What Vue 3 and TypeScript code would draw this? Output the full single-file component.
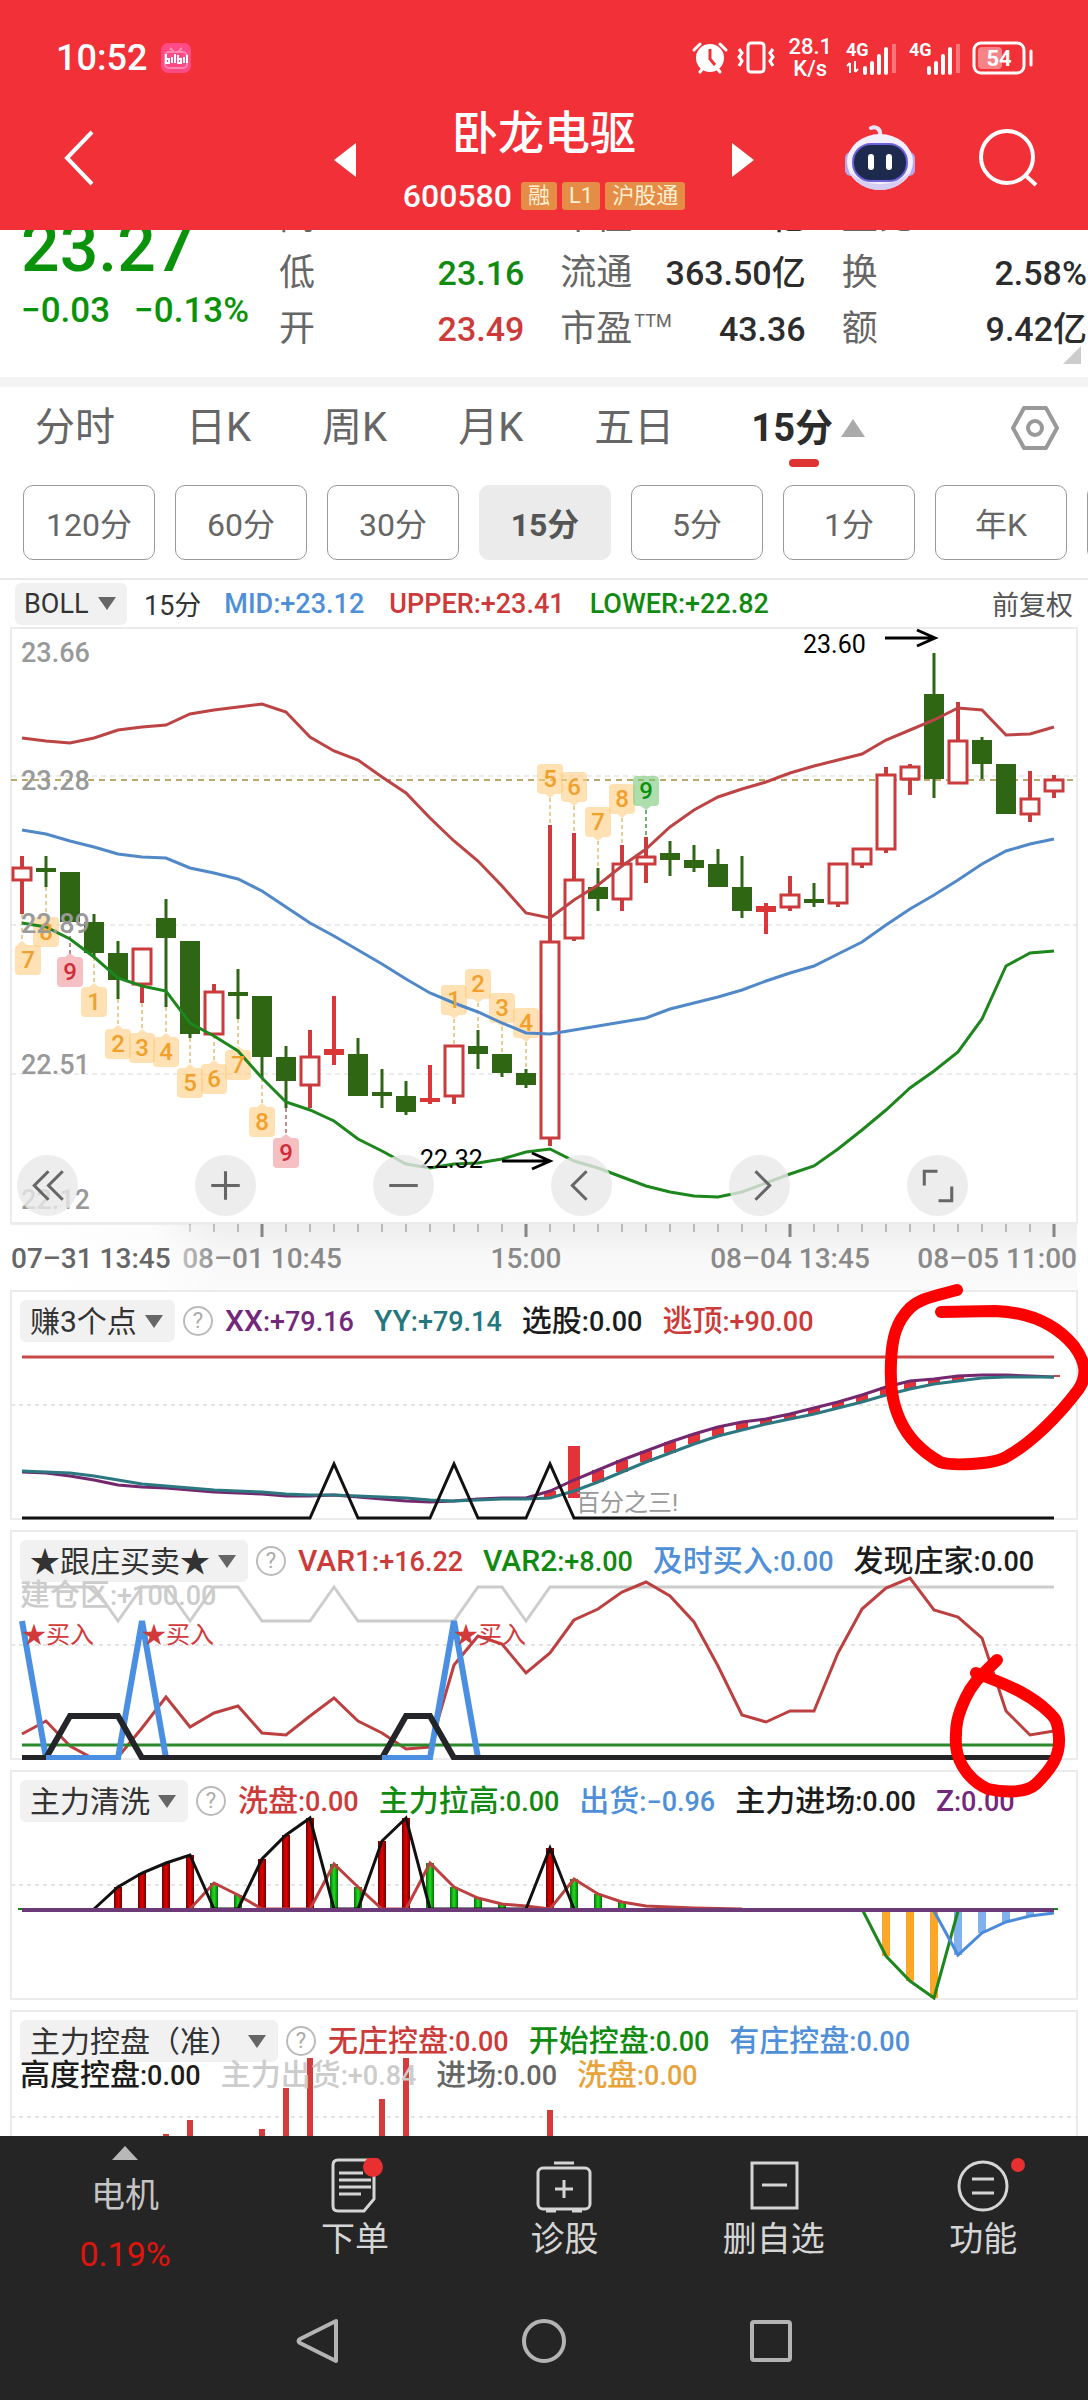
<script setup lang="ts">
import { ref } from 'vue'

type Candle = [kind: 'up' | 'down' | 'flat', high: number, low: number, top: number, bottom: number]
type Point = [index: number, y: number]
interface Badge { n: number; i: number; top: number; wick: number; tone: string; above: boolean; shift?: number }
interface Reading { name: string; value: string; tone: string }
interface Panel { id: string; title: string; row1: Reading[]; row2: Reading[]; view: string; top: number; grid: number }

const STEP = 24
const px = (i: number): number => 22 + STEP * i
const line = (ys: number[]): string => ys.map((y, i) => `${px(i)},${y}`).join(' ')
const path = (pts: Point[]): string => pts.map(([i, y]) => `${px(i)},${y}`).join(' ')

const quotes = [
  [
    { label: '高', value: '23.53', tone: 'red' },
    { label: '低', value: '23.16', tone: 'green' },
    { label: '开', value: '23.49', tone: 'red' },
  ],
  [
    { label: '市值', value: '363.50亿', tone: 'dark' },
    { label: '流通', value: '363.50亿', tone: 'dark' },
    { label: '市盈', sup: 'TTM', value: '43.36', tone: 'dark' },
  ],
  [
    { label: '量比', value: '1.04', tone: 'red' },
    { label: '换', value: '2.58%', tone: 'dark' },
    { label: '额', value: '9.42亿', tone: 'dark' },
  ],
]

const tabs = ['分时', '日K', '周K', '月K', '五日']
const periods = ['120分', '60分', '30分', '15分', '5分', '1分', '年K', '季K']
const period = ref('15分')

const boll: Reading[] = [
  { name: 'MID', value: '+23.12', tone: 'blue' },
  { name: 'UPPER', value: '+23.41', tone: 'red' },
  { name: 'LOWER', value: '+22.82', tone: 'green' },
]

const upper = [738, 741, 743, 738, 730, 727, 725, 714, 710, 707, 704, 712, 737, 751, 760, 777, 793, 818, 841, 861, 886, 913, 918, 900, 885, 866, 849, 827, 810, 797, 789, 782, 773, 766, 760, 754, 740, 730, 720, 708, 710, 735, 734, 727]
const mid = [830, 834, 841, 847, 854, 857, 858, 868, 873, 879, 891, 907, 923, 936, 950, 964, 979, 993, 1003, 1012, 1023, 1033, 1034, 1030, 1026, 1022, 1018, 1009, 1003, 997, 990, 981, 973, 966, 954, 942, 925, 909, 895, 880, 864, 851, 844, 839]
const lower = [923, 927, 939, 957, 978, 986, 991, 1023, 1036, 1051, 1078, 1102, 1110, 1121, 1139, 1151, 1164, 1168, 1164, 1163, 1159, 1152, 1149, 1161, 1168, 1177, 1186, 1192, 1196, 1197, 1192, 1183, 1174, 1166, 1149, 1130, 1110, 1088, 1071, 1052, 1019, 966, 953, 951]

const candles: Candle[] = [
  ['up', 856, 914, 867, 881], ['down', 856, 887, 868, 872], ['down', 872, 922, 872, 922], ['down', 914, 957, 922, 953],
  ['down', 941, 999, 953, 980], ['up', 948, 1003, 948, 985], ['down', 899, 1007, 918, 938], ['down', 941, 1038, 941, 1034],
  ['up', 984, 1035, 991, 1035], ['down', 969, 1019, 992, 996], ['down', 996, 1078, 996, 1057], ['down', 1046, 1108, 1057, 1081],
  ['up', 1030, 1108, 1056, 1086], ['flat', 996, 1065, 1049, 1055], ['down', 1038, 1096, 1054, 1096], ['down', 1069, 1108, 1092, 1096],
  ['down', 1081, 1115, 1096, 1112], ['flat', 1065, 1104, 1098, 1102], ['up', 1045, 1104, 1045, 1097], ['down', 1030, 1069, 1046, 1054],
  ['down', 1054, 1077, 1054, 1073], ['down', 1069, 1088, 1073, 1085], ['up', 825, 1146, 941, 1139], ['up', 833, 941, 879, 939],
  ['down', 868, 911, 887, 899], ['up', 845, 911, 863, 900], ['up', 837, 883, 856, 865], ['down', 841, 876, 853, 860],
  ['down', 845, 872, 860, 868], ['down', 849, 887, 864, 887], ['down', 856, 918, 887, 911], ['flat', 903, 934, 906, 912],
  ['up', 876, 911, 894, 908], ['down', 883, 907, 899, 903], ['up', 863, 907, 863, 904], ['up', 848, 868, 848, 865],
  ['up', 767, 853, 774, 850], ['up', 764, 795, 766, 780], ['down', 653, 798, 694, 779], ['up', 702, 783, 740, 784],
  ['down', 737, 779, 740, 764], ['down', 764, 814, 764, 814], ['up', 771, 822, 798, 815], ['up', 775, 798, 779, 792],
]

const badges: Badge[] = [
  { n: 7, i: 0, top: 945, wick: 914, tone: 'amber', above: false, shift: 6 },
  { n: 8, i: 1, top: 917, wick: 887, tone: 'amber', above: false },
  { n: 9, i: 2, top: 957, wick: 922, tone: 'rose', above: false },
  { n: 1, i: 3, top: 987, wick: 957, tone: 'amber', above: false },
  { n: 2, i: 4, top: 1029, wick: 999, tone: 'amber', above: false },
  { n: 3, i: 5, top: 1033, wick: 1003, tone: 'amber', above: false },
  { n: 4, i: 6, top: 1037, wick: 1007, tone: 'amber', above: false },
  { n: 5, i: 7, top: 1068, wick: 1038, tone: 'amber', above: false },
  { n: 6, i: 8, top: 1064, wick: 1035, tone: 'amber', above: false },
  { n: 7, i: 9, top: 1050, wick: 1019, tone: 'amber', above: false },
  { n: 8, i: 10, top: 1107, wick: 1078, tone: 'amber', above: false },
  { n: 9, i: 11, top: 1138, wick: 1108, tone: 'rose', above: false },
  { n: 1, i: 18, top: 985, wick: 1045, tone: 'amber', above: true },
  { n: 2, i: 19, top: 969, wick: 1030, tone: 'amber', above: true },
  { n: 3, i: 20, top: 993, wick: 1054, tone: 'amber', above: true },
  { n: 4, i: 21, top: 1008, wick: 1069, tone: 'amber', above: true },
  { n: 5, i: 22, top: 764, wick: 825, tone: 'amber', above: true },
  { n: 6, i: 23, top: 772, wick: 833, tone: 'amber', above: true },
  { n: 7, i: 24, top: 807, wick: 868, tone: 'amber', above: true },
  { n: 8, i: 25, top: 784, wick: 845, tone: 'amber', above: true },
  { n: 9, i: 26, top: 776, wick: 837, tone: 'mint', above: true },
]
const badgeX = (b: Badge): number => px(b.i) + (b.shift ?? 0)

const prices = [
  { text: '23.66', y: 662 }, { text: '23.28', y: 790 }, { text: '22.89', y: 933 }, { text: '22.51', y: 1074 }, { text: '22.12', y: 1209 },
]
const ticks = Array.from({ length: 37 }, (_, k) => k + 7)
const isMajor = (i: number): boolean => i % 11 === 10

const panels: Panel[] = [
  {
    id: 'gain', title: '赚3个点', view: '0 1290 1088 230', top: 1290, grid: 1405,
    row1: [
      { name: 'XX', value: '+79.16', tone: 'purple' }, { name: 'YY', value: '+79.14', tone: 'teal' },
      { name: '选股', value: '0.00', tone: 'black' }, { name: '逃顶', value: '+90.00', tone: 'red' },
    ],
    row2: [],
  },
  {
    id: 'follow', title: '★跟庄买卖★', view: '0 1530 1088 230', top: 1530, grid: 1645,
    row1: [
      { name: 'VAR1', value: '+16.22', tone: 'red' }, { name: 'VAR2', value: '+8.00', tone: 'green' },
      { name: '及时买入', value: '0.00', tone: 'blue' }, { name: '发现庄家', value: '0.00', tone: 'black' },
    ],
    row2: [{ name: '建仓区', value: '+100.00', tone: 'pale' }],
  },
  {
    id: 'wash', title: '主力清洗', view: '0 1770 1088 230', top: 1770, grid: 1885,
    row1: [
      { name: '洗盘', value: '0.00', tone: 'red' }, { name: '主力拉高', value: '0.00', tone: 'green' },
      { name: '出货', value: '−0.96', tone: 'blue' }, { name: '主力进场', value: '0.00', tone: 'black' },
      { name: 'Z', value: '0.00', tone: 'purple' },
    ],
    row2: [],
  },
  {
    id: 'control', title: '主力控盘（准）', view: '0 2010 1088 126', top: 2010, grid: 2117,
    row1: [
      { name: '无庄控盘', value: '0.00', tone: 'red' }, { name: '开始控盘', value: '0.00', tone: 'green' },
      { name: '有庄控盘', value: '0.00', tone: 'blue' },
    ],
    row2: [
      { name: '高度控盘', value: '0.00', tone: 'black' }, { name: '主力出货', value: '+0.84', tone: 'pale' },
      { name: '进场', value: '0.00', tone: 'gray' }, { name: '洗盘', value: '0.00', tone: 'orange' },
    ],
  },
]

const xx = [1472, 1473, 1476, 1480, 1485, 1487, 1488, 1490, 1492, 1493, 1494, 1496, 1496, 1495, 1497, 1499, 1501, 1502, 1501, 1499, 1498, 1498, 1491, 1480, 1470, 1460, 1451, 1442, 1434, 1427, 1422, 1419, 1414, 1408, 1402, 1395, 1387, 1381, 1379, 1376, 1375, 1375, 1376, 1377]
const yy = [1471, 1472, 1473, 1476, 1480, 1484, 1486, 1488, 1490, 1491, 1492, 1494, 1495, 1495, 1496, 1497, 1498, 1500, 1501, 1500, 1499, 1499, 1498, 1491, 1482, 1472, 1462, 1453, 1444, 1436, 1430, 1424, 1419, 1414, 1408, 1402, 1395, 1389, 1384, 1381, 1378, 1377, 1377, 1377]
const gapBars = Array.from({ length: 18 }, (_, k) => k + 22).filter((i) => i !== 23)
const picks: Point[] = [[0, 1518], [12, 1518], [13, 1464], [14, 1518], [17, 1518], [18, 1464], [19, 1518], [21, 1518], [22, 1464], [23, 1518], [43, 1518]]

const zone: Point[] = [[0, 1587], [3, 1587], [4, 1621], [5, 1587], [6, 1587], [7, 1621], [8, 1587], [9, 1587], [10, 1621], [12, 1621], [13, 1587], [14, 1621], [18, 1621], [19, 1587], [20, 1587], [21, 1621], [22, 1587], [43, 1587]]
const var1 = [1734, 1721, 1746, 1759, 1757, 1728, 1697, 1727, 1713, 1706, 1733, 1735, 1716, 1698, 1721, 1733, 1749, 1747, 1665, 1636, 1644, 1673, 1653, 1620, 1609, 1592, 1582, 1596, 1622, 1666, 1715, 1722, 1711, 1711, 1653, 1609, 1588, 1578, 1610, 1617, 1638, 1711, 1735, 1731]
const buys: Point[] = [[0, 1621], [1, 1758], [4, 1758], [5, 1621], [6, 1758], [17, 1758], [18, 1621], [19, 1758]]
const makers: Point[] = [[0, 1758], [1, 1758], [2, 1716], [4, 1716], [5, 1758], [15, 1758], [16, 1716], [17, 1716], [18, 1758], [43, 1758]]
const buyRuns: Point[][] = [[[1, 1758], [4, 1758]], [[15, 1758], [17, 1758]]]
const buyMarks = [0, 5, 18]

const washBars: Point[] = [[4, 1887], [5, 1873], [6, 1863], [7, 1855], [10, 1859], [11, 1835], [12, 1818], [15, 1841], [16, 1818], [22, 1848]]
const liftBars: Point[] = [[8, 1883], [9, 1895], [13, 1864], [14, 1887], [17, 1863], [18, 1887], [19, 1898], [20, 1904], [23, 1879], [24, 1894], [25, 1902]]
const enterLine: Point[] = [[3, 1909], [4, 1887], [5, 1873], [6, 1863], [7, 1855], [8, 1909], [9, 1909], [10, 1859], [11, 1835], [12, 1818], [13, 1909], [14, 1909], [15, 1841], [16, 1818], [17, 1909], [21, 1909], [22, 1848], [23, 1909]]
const washLine: Point[] = [[7, 1909], [8, 1883], [9, 1895], [10, 1909], [12, 1909], [13, 1864], [14, 1887], [15, 1909], [16, 1909], [17, 1863], [18, 1887], [19, 1898], [20, 1904], [21, 1906], [22, 1909], [23, 1879], [24, 1894], [25, 1902], [26, 1906], [28, 1908], [30, 1909]]
const dropBars: Point[] = [[36, 1956], [37, 1981], [38, 1998]]
const dropLine: Point[] = [[35, 1909], [36, 1956], [37, 1981], [38, 1998], [39, 1911]]
const sellBars: Point[] = [[39, 1955], [40, 1933], [41, 1922], [42, 1916]]
const sellLine: Point[] = [[38, 1911], [39, 1955], [40, 1933], [41, 1922], [42, 1916], [43, 1913]]
const controlBars: Point[] = [[6, 2134], [7, 2120], [10, 2129], [11, 2088], [12, 2058], [15, 2099], [16, 2058], [22, 2110]]
</script>

<template>
  <div class="app">
    <header class="top">
      <div class="status">
        <span class="clock">10:52</span>
        <svg class="bili" width="30" height="30" viewBox="0 0 30 30" aria-hidden="true">
          <rect width="30" height="30" rx="7" fill="#ff4a86" />
          <path d="M9 5l4 4M21 5l-4 4" stroke="#ff8fb5" stroke-width="2" />
          <rect x="4" y="9" width="22" height="16" rx="4" fill="none" stroke="#ff86af" stroke-width="2" />
          <path d="M5 11v9h3v-4h-3M11 14v6M14 11v9M17 12v8h3v-4h-3M23 14v6M26 12v8" fill="none" stroke="#fff" stroke-width="2" />
        </svg>
        <span class="spacer"></span>
        <svg width="36" height="34" viewBox="0 0 36 34" aria-hidden="true">
          <circle cx="18" cy="17" r="14" fill="#fff" />
          <path d="M2 9l6-6M34 9l-6-6M8 31l3-4M28 31l-3-4" stroke="#fff" stroke-width="3" stroke-linecap="round" />
          <path d="M18 8v10l5 6" fill="none" stroke="#f23037" stroke-width="3" />
        </svg>
        <svg class="vibrate" width="40" height="34" viewBox="0 0 40 34" fill="none" stroke="#fff" stroke-width="3" aria-hidden="true">
          <rect x="12" y="2" width="16" height="29" rx="3" />
          <path d="M3 8l3 4-3 4 3 4-3 5M37 8l-3 4 3 4-3 4 3 5" />
        </svg>
        <span class="speed"><span>28.1</span><span>K/s</span></span>
        <svg class="signal" width="52" height="34" viewBox="0 0 52 34" aria-hidden="true">
          <text x="0" y="15" font-size="18" font-weight="700" fill="#fff">4G</text>
          <path d="M4 22v10M1 25l3-3M9 20v11M12 28l-3 3" stroke="#fff" stroke-width="2" fill="none" />
          <path d="M19 27v5M26 22v10M33 15v17M40 8v24" stroke="#fff" stroke-width="4" stroke-linecap="round" />
          <path d="M48 3v29" stroke="#fff" stroke-opacity=".35" stroke-width="4" />
        </svg>
        <svg class="signal" width="52" height="34" viewBox="0 0 52 34" aria-hidden="true">
          <text x="0" y="15" font-size="18" font-weight="700" fill="#fff">4G</text>
          <path d="M20 27v5M27 22v10M34 15v17M41 8v24" stroke="#fff" stroke-width="4" stroke-linecap="round" />
          <path d="M49 3v29" stroke="#fff" stroke-opacity=".35" stroke-width="4" />
        </svg>
        <svg width="61" height="34" viewBox="0 0 61 34" aria-hidden="true">
          <rect x="2" y="2" width="50" height="30" rx="7" fill="none" stroke="#fff" stroke-width="3" />
          <rect x="6" y="6" width="24" height="22" rx="4" fill="#fff" fill-opacity=".4" />
          <path d="M59 10v14" stroke="#fff" stroke-width="3" stroke-linecap="round" />
          <text x="27" y="25" font-size="22" font-weight="700" text-anchor="middle" fill="#fff">54</text>
        </svg>
      </div>
      <div class="titlebar">
        <button class="icon-btn back" aria-label="返回">
          <svg width="34" height="58" viewBox="0 0 34 58"><path d="M30 3L5 29l25 26" fill="none" stroke="#fff" stroke-width="4" /></svg>
        </button>
        <div class="stock">
          <button class="icon-btn" aria-label="上一只"><svg width="22" height="36" viewBox="0 0 22 36"><path d="M22 1v34L0 18z" fill="#fff" /></svg></button>
          <div class="stock-main">
            <h1>卧龙电驱</h1>
            <div class="code">
              <span>600580</span><i>融</i><i>L1</i><i>沪股通</i>
            </div>
          </div>
          <button class="icon-btn" aria-label="下一只"><svg width="22" height="36" viewBox="0 0 22 36"><path d="M0 1v34l22-17z" fill="#fff" /></svg></button>
        </div>
        <div class="tools">
          <button class="icon-btn" aria-label="智能助手">
            <svg width="72" height="66" viewBox="0 0 72 66">
              <path d="M36 10C37 4 32 1 27 3" fill="none" stroke="#e9e4fa" stroke-width="4" stroke-linecap="round" />
              <rect x="1" y="27" width="12" height="24" rx="6" fill="#b9a8ee" />
              <rect x="59" y="27" width="12" height="24" rx="6" fill="#b9a8ee" />
              <ellipse cx="36" cy="37" rx="33" ry="28" fill="#f3effd" />
              <path d="M6 46c5 12 16 19 30 19s25-7 30-19c-6 8-16 13-30 13S12 54 6 46z" fill="#d6cdf3" />
              <rect x="9" y="19" width="54" height="37" rx="18" fill="#1d2a4d" stroke="#6d62d8" stroke-width="2" />
              <path d="M27 32v10M45 32v10" stroke="#fff" stroke-width="6" stroke-linecap="round" />
            </svg>
          </button>
          <button class="icon-btn" aria-label="搜索">
            <svg width="60" height="60" viewBox="0 0 60 60" fill="none" stroke="#fff" stroke-width="4"><circle cx="29" cy="29" r="26" /><path d="M47 47l11 10" /></svg>
          </button>
        </div>
      </div>
    </header>

    <section class="quote">
      <div class="last">
        <strong>23.27</strong>
        <p><span>−0.03</span><span>−0.13%</span></p>
      </div>
      <dl v-for="(col, c) in quotes" :key="c">
        <div v-for="q in col" :key="q.label">
          <dt>{{ q.label }}<sup v-if="q.sup">{{ q.sup }}</sup></dt>
          <dd :class="q.tone">{{ q.value }}</dd>
        </div>
      </dl>
      <svg class="corner" width="18" height="18" viewBox="0 0 18 18" aria-hidden="true"><path d="M18 0v18H0z" fill="#ccc" /></svg>
    </section>

    <nav class="tabs">
      <button v-for="t in tabs" :key="t">{{ t }}</button>
      <button class="active">15分<svg width="24" height="18" viewBox="0 0 24 18" aria-hidden="true"><path d="M12 0l12 18H0z" fill="#aaa" /></svg></button>
      <button class="gear" aria-label="设置">
        <svg width="48" height="46" viewBox="0 0 48 46" fill="none" stroke="#999" stroke-width="4" stroke-linejoin="round"><path d="M13 3h22l11 20-11 20H13L2 23z" /><circle cx="24" cy="23" r="7" /></svg>
      </button>
    </nav>

    <div class="periods">
      <button v-for="p in periods" :key="p" :class="{ on: p === period }" @click="period = p">{{ p }}</button>
    </div>

    <div class="legend">
      <label class="picker">
        <select aria-label="主图指标"><option>BOLL</option></select>
        <svg width="18" height="13" viewBox="0 0 18 13" aria-hidden="true"><path d="M0 0h18L9 13z" fill="#666" /></svg>
      </label>
      <span class="span">15分</span>
      <span v-for="r in boll" :key="r.name" :class="['line-value', r.tone]">{{ r.name }}:{{ r.value }}</span>
      <span class="adjust">前复权</span>
    </div>

    <section class="chart">
      <svg viewBox="0 627 1088 663" role="img" aria-label="15分钟K线">
        <defs>
          <linearGradient id="shade" x1="0" y1="0" x2="0" y2="1"><stop offset="0" stop-color="#ededed" /><stop offset=".5" stop-color="#f8f8f8" /><stop offset="1" stop-color="#fafafa" /></linearGradient>
          <linearGradient id="fade" x1="0" y1="0" x2="1" y2="0"><stop offset="0" stop-color="#fff" /><stop offset=".7" stop-color="#fff" stop-opacity=".8" /><stop offset="1" stop-color="#fff" stop-opacity="0" /></linearGradient>
        </defs>
        <rect x="11" y="1223" width="1066" height="67" fill="url(#shade)" />
        <rect x="11" y="628" width="1066" height="595" fill="#fff" stroke="#ebebeb" stroke-width="2" />
        <path d="M11 776h1066M11 925h1066M11 1074h1066" stroke="#d9d9d9" stroke-dasharray="5 4" />
        <path d="M11 780h1066" stroke="#b9a86c" stroke-width="2" stroke-dasharray="6 5" />

        <g v-for="(c, i) in candles" :key="i" :class="['candle', c[0]]">
          <template v-if="c[0] === 'up'">
            <path :d="`M${px(i)} ${c[1]}V${c[3]}M${px(i)} ${c[4]}V${c[2]}`" />
            <rect :x="px(i) - 9" :y="c[3] + 1" width="18" :height="c[4] - c[3] - 2" />
          </template>
          <template v-else>
            <path :d="`M${px(i)} ${c[1]}V${c[2]}`" />
            <rect :x="px(i) - 10" :y="c[3]" width="20" :height="c[4] - c[3]" />
          </template>
        </g>

        <g v-for="(b, k) in badges" :key="k" :class="['badge', b.tone]">
          <line :x1="px(b.i)" :x2="px(b.i)" :y1="b.above ? b.top + 34 : b.wick" :y2="b.above ? b.wick : b.top - 3" />
          <rect :x="badgeX(b) - 13" :y="b.top" width="26" height="30" rx="4" />
          <path :d="b.above ? `M${px(b.i) - 5} ${b.top + 30}h10l-5 4z` : `M${px(b.i) - 5} ${b.top}h10l-5 -4z`" />
        </g>

        <polyline :points="line(upper)" class="upper" />
        <polyline :points="line(mid)" class="mid" />
        <polyline :points="line(lower)" class="lower" />

        <g v-for="(b, k) in badges" :key="`n${k}`" :class="['digit', b.tone]">
          <text :x="badgeX(b)" :y="b.top + 23">{{ b.n }}</text>
        </g>

        <g class="price"><text v-for="p in prices" :key="p.text" x="21" :y="p.y">{{ p.text }}</text></g>
        <g class="extreme">
          <text x="803" y="653">23.60</text>
          <path d="M885 638h49M917 630l18 8-18 8" />
          <text x="420" y="1168">22.32</text>
          <path d="M502 1161h47M532 1153l18 8-18 8" />
        </g>

        <path v-for="i in ticks" :key="`t${i}`" :d="`M${px(i)} 1224v${isMajor(i) ? 13 : 8}`" stroke="#858585" :stroke-width="isMajor(i) ? 3 : 1" />
        <g class="time">
          <text x="262" y="1268" text-anchor="middle">08–01 10:45</text>
          <text x="526" y="1268" text-anchor="middle">15:00</text>
          <text x="790" y="1268" text-anchor="middle">08–04 13:45</text>
          <text x="1077" y="1268" text-anchor="end">08–05 11:00</text>
        </g>
        <rect x="0" y="1225" width="220" height="65" fill="url(#fade)" />
        <text class="start" x="11" y="1268">07–31 13:45</text>
      </svg>
      <div class="controls">
        <button aria-label="最早"><svg viewBox="0 0 60 60"><path d="M31 16L17 30l14 14M45 16L31 30l14 14" /></svg></button>
        <button aria-label="放大"><svg viewBox="0 0 60 60"><path d="M16 30h28M30 16v28" /></svg></button>
        <button aria-label="缩小"><svg viewBox="0 0 60 60"><path d="M16 30h28" /></svg></button>
        <button aria-label="左移"><svg viewBox="0 0 60 60"><path d="M35 16L21 30l14 14" /></svg></button>
        <button aria-label="右移"><svg viewBox="0 0 60 60"><path d="M26 16l14 14-14 14" /></svg></button>
        <button aria-label="全屏"><svg viewBox="0 0 60 60"><path d="M17 30V16h13M44 31v14H31" /></svg></button>
      </div>
    </section>

    <main class="panels">
      <section v-for="p in panels" :key="p.id" class="panel">
        <svg :viewBox="p.view" role="img" :aria-label="p.title">
          <rect x="11" :y="p.top + 1" width="1066" height="228" fill="#fff" stroke="#ebebeb" stroke-width="2" />
          <path :d="`M11 ${p.grid}h1066`" stroke="#e4e4e4" stroke-width="2" stroke-dasharray="4 4" />
          <g v-if="p.id === 'gain'">
            <path d="M22 1357h1032" stroke="#c84848" stroke-width="3" />
            <rect v-for="i in gapBars" :key="i" :x="px(i) - 6" :y="xx[i]" width="12" :height="yy[i] - xx[i]" fill="#e23338" />
            <rect x="568" y="1446" width="12" height="52" fill="#e23338" />
            <path d="M1054 1376h6" stroke="#c84848" stroke-width="2" />
            <polyline :points="line(xx)" class="plot xx" />
            <polyline :points="line(yy)" class="plot yy" />
            <polyline :points="path(picks)" class="plot ink" />
            <text x="576" y="1511" font-size="24" fill="#999">百分之三!</text>
          </g>
          <g v-else-if="p.id === 'follow'">
            <polyline :points="path(zone)" class="plot zone" />
            <polyline :points="line(var1)" class="plot crimson" />
            <path d="M22 1745h1032" stroke="#2a8a2a" stroke-width="3" />
            <polyline :points="path(buys)" class="plot buys" />
            <polyline :points="path(makers)" class="plot makers" />
            <polyline v-for="(run, k) in buyRuns" :key="`r${k}`" :points="path(run)" class="plot buys" />
            <text v-for="i in buyMarks" :key="i" :x="px(i)" y="1643" font-size="24" fill="#d23a3a">★买入</text>
          </g>
          <g v-else-if="p.id === 'wash'">
            <defs>
              <linearGradient id="redbar"><stop offset="0" stop-color="#6d0000" /><stop offset=".5" stop-color="#e80000" /><stop offset="1" stop-color="#6d0000" /></linearGradient>
              <linearGradient id="greenbar"><stop offset="0" stop-color="#0a6b0a" /><stop offset=".5" stop-color="#1ee01e" /><stop offset="1" stop-color="#0a6b0a" /></linearGradient>
            </defs>
            <rect v-for="[i, y] in washBars" :key="i" :x="px(i) - 4" :y="y" width="8" :height="1909 - y" fill="url(#redbar)" />
            <rect v-for="[i, y] in liftBars" :key="i" :x="px(i) - 4" :y="y" width="8" :height="1909 - y" fill="url(#greenbar)" />
            <rect v-for="[i, y] in dropBars" :key="i" :x="px(i) - 4" y="1910" width="8" :height="y - 1910" fill="#fca728" />
            <rect v-for="[i, y] in sellBars" :key="i" :x="px(i) - 4" y="1910" width="8" :height="y - 1910" fill="#82b1ee" />
            <polyline :points="path(washLine)" class="plot crimson" />
            <polyline :points="path(enterLine)" class="plot ink" />
            <polyline :points="path(dropLine)" class="plot drop" />
            <polyline :points="path(sellLine)" class="plot sell" />
            <path d="M18 1909h4M1054 1909h4" stroke="#118811" stroke-width="2" />
            <path d="M22 1910h1032" stroke="#6c3a76" stroke-width="4" />
          </g>
          <g v-else>
            <rect v-for="[i, y] in controlBars" :key="i" :x="px(i) - 3" :y="y" width="6" :height="2136 - y" fill="#d43b3b" />
          </g>
        </svg>
        <div class="readout">
          <div class="row">
            <label class="picker">
              <select :aria-label="`指标 ${p.title}`"><option>{{ p.title }}</option></select>
              <svg width="18" height="13" viewBox="0 0 18 13" aria-hidden="true"><path d="M0 0h18L9 13z" fill="#666" /></svg>
            </label>
            <button class="help" aria-label="说明">?</button>
            <span v-for="r in p.row1" :key="r.name" :class="['reading', r.tone]">{{ r.name }}<b>:{{ r.value }}</b></span>
          </div>
          <div v-if="p.row2.length" class="row second">
            <span v-for="r in p.row2" :key="r.name" :class="['reading', r.tone]">{{ r.name }}<b>:{{ r.value }}</b></span>
          </div>
        </div>
      </section>
      <svg class="ink-marks" viewBox="0 1280 1088 530" aria-hidden="true">
        <path d="M957 1290C935 1296 921 1298 910 1308C896 1322 892 1338 891 1362C890 1386 892 1402 900 1420C910 1442 926 1454 940 1462C950 1466 992 1465 1006 1457C1032 1443 1060 1414 1078 1390C1088 1376 1086 1362 1074 1346C1054 1322 1026 1312 995 1311L941 1312" />
        <path d="M997 1660C981 1676 973 1682 966 1697C957 1716 955 1726 956 1746C958 1766 972 1782 988 1789C1006 1793 1026 1793 1036 1784C1052 1768 1060 1756 1059 1738C1058 1720 1056 1718 1042 1706C1022 1690 1000 1682 976 1673" />
      </svg>
    </main>

    <footer>
      <nav class="bottom">
        <a href="#sector" class="sector">
          <svg width="26" height="14" viewBox="0 0 26 14" aria-hidden="true"><path d="M13 0l13 14H0z" fill="#b8b8b8" /></svg>
          <span>电机</span><em>0.19%</em>
        </a>
        <a href="#order">
          <svg width="60" height="56" viewBox="0 0 60 56"><path d="M13 2h31q5 0 5 5v34L39 53H13q-5 0-5-5V7q0-5 5-5zM14 15h24M14 22h32M14 29h32M14 36h22" /><circle cx="48" cy="9" r="10" class="dot" /></svg>
          <span>下单</span>
        </a>
        <a href="#diagnose">
          <svg width="60" height="56" viewBox="0 0 60 56"><rect x="4" y="10" width="52" height="41" rx="5" /><path d="M20 5h20M12 53h10M38 53h10M21 31h18M30 22v18" /></svg>
          <span>诊股</span>
        </a>
        <a href="#remove">
          <svg width="60" height="56" viewBox="0 0 60 56"><path d="M8 5h45v45H8zM18 27h25" /></svg>
          <span>删自选</span>
        </a>
        <a href="#more">
          <svg width="84" height="56" viewBox="0 0 84 56"><circle cx="42" cy="28" r="24" /><path d="M31 21h22M31 35h22" /><circle cx="77" cy="7" r="7" class="dot" /></svg>
          <span>功能</span>
        </a>
      </nav>
      <div class="system">
        <button aria-label="返回"><svg width="48" height="48" viewBox="0 0 48 48"><path d="M43 4v40L7 26q-3-2 0-4z" /></svg></button>
        <button aria-label="主页"><svg width="48" height="48" viewBox="0 0 48 48"><circle cx="24" cy="24" r="20" /></svg></button>
        <button aria-label="多任务"><svg width="48" height="48" viewBox="0 0 48 48"><rect x="5" y="5" width="38" height="38" rx="2" /></svg></button>
      </div>
    </footer>
  </div>
</template>

<style>
body { background: #fff; }
</style>

<style scoped>
.app { font-family: Roboto, "Noto Sans CJK SC", sans-serif; color: #333; background: #fff; overflow: hidden; }
.app * { box-sizing: border-box; }
button, select { font: inherit; color: inherit; border: 0; background: none; padding: 0; margin: 0; }
svg { display: block; flex: none; }
h1, p, dl, dd { margin: 0; }

.red { color: #cc3a3a; }
.green { color: #118a11; }
.blue { color: #4f8fd8; }
.purple { color: #74287c; }
.teal { color: #24777f; }
.black { color: #1c1c1c; }
.dark { color: #2c2c2c; }
.gray { color: #666; }
.pale { color: #ccc; }
.orange { color: #e8a33a; }

.top { background: #f23037; color: #fff; height: 230px; display: flex; flex-direction: column; }
.status { display: flex; align-items: center; padding: 30px 55px 0 56px; height: 86px; }
.clock { font-size: 36px; font-weight: 500; margin-right: 14px; }
.spacer { flex: 1; }
.vibrate { margin: 0 12px 0 8px; }
.speed { display: flex; flex-direction: column; align-items: center; font-size: 22px; line-height: 22px; font-weight: 500; margin-right: 14px; }
.signal { margin-right: 11px; overflow: visible; }
.titlebar { display: grid; grid-template-columns: 1fr auto 1fr; align-items: center; height: 144px; padding: 0 50px; }
.icon-btn { display: block; }
.back { padding-left: 12px; }
.stock { display: flex; align-items: center; justify-content: space-between; width: 420px; }
.stock-main { display: flex; flex-direction: column; align-items: center; gap: 14px; }
.stock > .icon-btn { padding-top: 4px; }
h1 { font-size: 46px; line-height: 62px; font-weight: 500; }
.code { display: flex; align-items: center; gap: 5px; font-size: 32px; line-height: 36px; font-weight: 500; white-space: nowrap; }
.code span { margin-right: 4px; }
.code i { font-style: normal; font-weight: 400; font-size: 22px; line-height: 28px; padding: 0 7px; border-radius: 3px; background: #e58c46; color: #fdf0d2; }
.tools { display: flex; align-items: center; justify-content: flex-end; gap: 62px; }

.quote { position: relative; display: grid; grid-template-columns: 222px 1fr 1fr 1fr; column-gap: 36px; height: 157px; padding: 0 1px 0 21px; overflow: hidden; border-bottom: 10px solid #f4f4f4; font-weight: 500; }
.last { color: #0a930a; margin-top: -21px; white-space: nowrap; }
.last strong { display: block; font-size: 68px; line-height: 78px; font-weight: 500; }
.last p { display: flex; gap: 24px; font-size: 35px; line-height: 48px; }
.quote dl { margin-top: -41px; }
.quote dl div { display: flex; justify-content: space-between; align-items: center; height: 56px; white-space: nowrap; }
.quote dt { display: flex; font-size: 36px; line-height: 56px; font-weight: 400; color: #666; }
.quote sup { font-size: 18px; line-height: 40px; padding-left: 2px; }
.quote dd { font-size: 34px; line-height: 56px; }
.corner { position: absolute; right: 7px; bottom: 13px; }

.tabs { display: flex; align-items: center; gap: 71px; height: 98px; padding: 0 29px 16px 35px; font-size: 40px; line-height: 50px; color: #666; }
.tabs button { white-space: nowrap; }
.tabs .active { position: relative; display: flex; align-items: center; gap: 8px; margin-left: 6px; color: #2c2c2c; font-weight: 700; font-size: 38px; }
.tabs .active::after { content: ""; position: absolute; left: 38px; bottom: -14px; width: 30px; height: 8px; border-radius: 4px; background: #e03333; }
.tabs .gear { margin-left: auto; }

.periods { display: flex; gap: 20px; padding: 0 0 18px 23px; overflow: hidden; border-bottom: 2px solid #e8e8e8; }
.periods button { flex: 0 0 132px; height: 75px; border: 1px solid #999; border-radius: 10px; font-size: 32px; color: #666; background: #fff; padding-bottom: 2px; }
.periods .on { background: #ebebeb; border-color: #ebebeb; font-weight: 700; color: #555; }

.legend { display: flex; align-items: center; gap: 25px; height: 47px; padding: 0 15px; font-size: 27px; white-space: nowrap; }
.legend .picker { padding: 0 11px 0 9px; margin-right: -8px; gap: 9px; }
.legend .span { color: #333; margin-right: -2px; }
.line-value { font-weight: 500; }
.adjust { margin-left: auto; color: #555; }
.picker { display: flex; align-items: center; gap: 8px; height: 42px; padding: 0 12px 0 10px; border-radius: 6px; background: #f1f1f1; color: #333; }
.picker select { appearance: none; height: 42px; }

.chart { position: relative; }
.chart > svg, .panel > svg { width: 100%; height: auto; }
svg text { font-family: Roboto, "Noto Sans CJK SC", sans-serif; }
.candle path { fill: none; stroke-width: 3; }
.up path { stroke: #cc3b3b; stroke-width: 4; }
.up rect { fill: #fff; stroke: #cc3b3b; stroke-width: 3; }
.down path { stroke: #2e6614; }
.down rect { fill: #2e6614; }
.flat path { stroke: #dc3636; stroke-width: 4; }
.flat rect { fill: #dc3636; }
.badge line { stroke-width: 2; stroke-dasharray: 4 3; }
.badge.amber { fill: rgba(255, 205, 130, .6); }
.badge.amber line { stroke: #e6cf92; }
.badge.rose { fill: rgba(240, 150, 155, .6); }
.badge.rose line { stroke: #c48a8a; }
.badge.mint { fill: rgba(120, 200, 120, .6); }
.badge.mint line { stroke: #72b072; }
.digit text { font-size: 24px; font-weight: 500; text-anchor: middle; }
.digit.amber { fill: #f0a02c; }
.digit.rose { fill: #d02c38; }
.digit.mint { fill: #0f8f0f; }
.upper, .mid, .lower { fill: none; stroke-width: 3; }
.upper { stroke: #bd4444; }
.mid { stroke: #5088c8; }
.lower { stroke: #1d861d; }
.price { font-size: 27px; fill: #999; font-weight: 500; }
.extreme { font-size: 25px; fill: #000; }
.extreme path { fill: none; stroke: #000; stroke-width: 3; }
.time, .start { font-size: 28px; font-weight: 500; fill: #8a8a8a; }
.start { fill: #666; }
.controls { position: absolute; left: 17px; bottom: 74px; display: flex; gap: 117px; }
.controls button { width: 61px; height: 61px; border-radius: 50%; background: rgba(232, 232, 232, .8); }
.controls svg { width: 61px; height: 61px; fill: none; stroke: #666; stroke-width: 3; }

.panels { position: relative; display: flex; flex-direction: column; gap: 10px; }
.panel { display: grid; }
.panel > * { grid-area: 1 / 1; min-width: 0; }
.readout { padding: 10px 20px 0; z-index: 1; }
.row { display: flex; align-items: center; gap: 20px; height: 42px; font-size: 30px; white-space: nowrap; }
.row .picker { margin-right: -12px; }
.row.second { height: 26px; }
.help { width: 30px; height: 30px; margin-right: -8px; border: 2px solid #bbb; border-radius: 50%; font-size: 22px; line-height: 26px; color: #aaa; }
.reading { line-height: 40px; font-weight: 500; }
.reading b { font-size: 27px; font-weight: 500; }
.plot { fill: none; stroke-width: 3; }
.xx { stroke: #74286e; }
.yy { stroke: #2c7880; }
.ink { stroke: #111; }
.zone { stroke: #ccc; }
.crimson { stroke: #bd4040; }
.buys { stroke: #4a8fe2; stroke-width: 6; }
.makers { stroke: #232528; stroke-width: 6; }
.drop { stroke: #1d861d; }
.sell { stroke: #4a8ad8; }
.ink-marks { position: absolute; z-index: 2; left: 0; top: -10px; width: 100%; pointer-events: none; }
.ink-marks path { fill: none; stroke: #f00; stroke-width: 12; stroke-linecap: round; stroke-linejoin: round; }

footer { background: #252525; height: 264px; color: #d5d5d5; }
.bottom { display: grid; grid-template-columns: 23% repeat(4, 1fr); height: 144px; }
.bottom a { display: flex; flex-direction: column; align-items: center; padding-top: 22px; color: inherit; text-decoration: none; font-size: 34px; line-height: 50px; }
.bottom .sector { padding-top: 10px; color: #c4c4c4; }
.sector span { line-height: 70px; }
.bottom em { font-style: normal; color: #e0140c; line-height: 48px; }
.bottom a > svg { fill: none; stroke: #d5d5d5; stroke-width: 3; }
.bottom .sector svg { stroke: none; }
.bottom .dot { fill: #e83030; stroke: none; }
.system { display: flex; justify-content: center; gap: 179px; padding-top: 37px; }
.system svg { fill: none; stroke: #b4b4b4; stroke-width: 4; stroke-linejoin: round; }
</style>
